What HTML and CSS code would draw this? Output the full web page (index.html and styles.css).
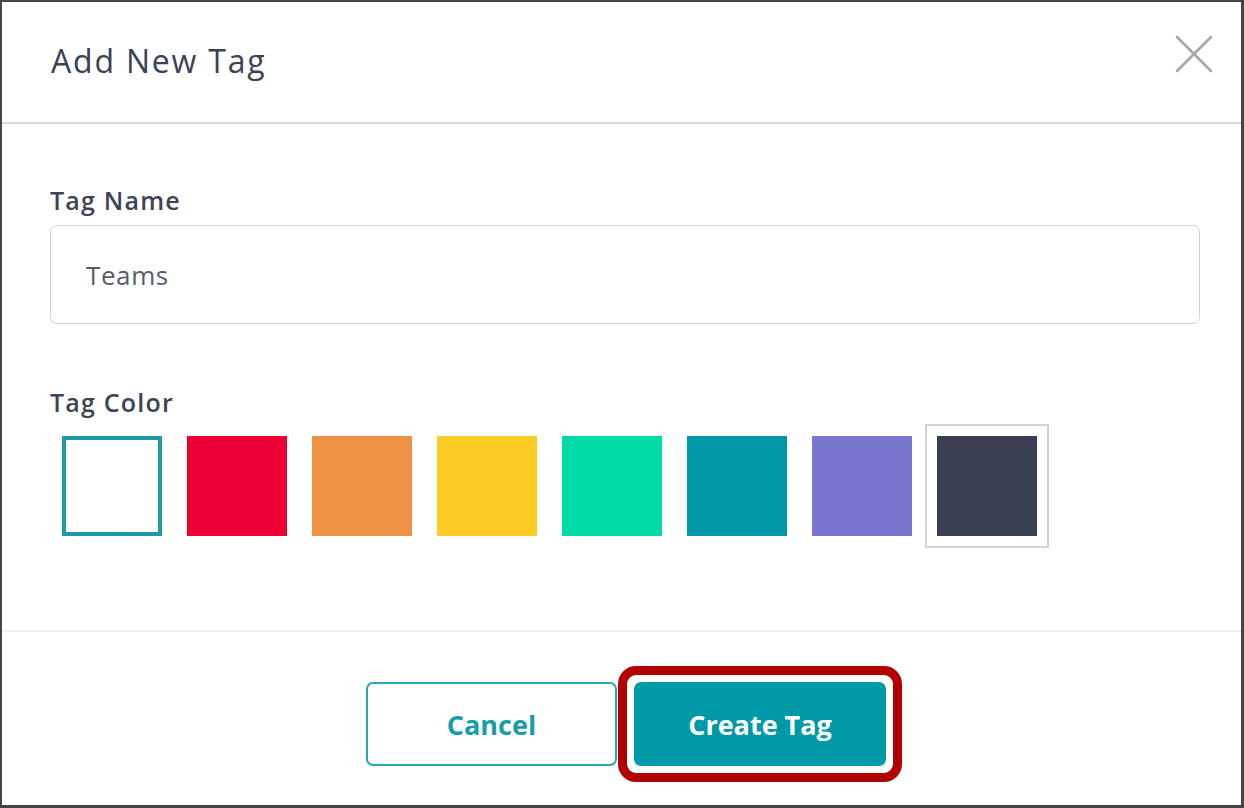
FILE: index.html
```html
<!DOCTYPE html>
<html lang="en">
<head>
<meta charset="utf-8">
<title>Add New Tag</title>
<link rel="stylesheet" href="styles.css">
</head>
<body>
<div class="frame">
  <header class="modal-header">
    <h1 class="modal-title">Add New Tag</h1>
    <button class="close-btn" aria-label="Close">
      <svg width="38" height="38" viewBox="0 0 38 38"><path d="M2 2 L36 36 M36 2 L2 36" stroke="#a3a7ad" stroke-width="2.6" stroke-linecap="round" fill="none"/></svg>
    </button>
  </header>
  <section class="modal-body">
    <label class="field-label">Tag Name</label>
    <div class="text-input">Teams</div>
    <label class="field-label color-label">Tag Color</label>
    <div class="swatches">
      <div class="swatch-cell"><div class="swatch swatch-white selected"></div></div>
      <div class="swatch-cell"><div class="swatch swatch-red"></div></div>
      <div class="swatch-cell"><div class="swatch swatch-orange"></div></div>
      <div class="swatch-cell"><div class="swatch swatch-yellow"></div></div>
      <div class="swatch-cell"><div class="swatch swatch-green"></div></div>
      <div class="swatch-cell"><div class="swatch swatch-teal"></div></div>
      <div class="swatch-cell"><div class="swatch swatch-purple"></div></div>
      <div class="swatch-cell focused"><div class="swatch swatch-dark"></div></div>
    </div>
  </section>
  <footer class="modal-footer">
    <button class="btn btn-outline">Cancel</button>
    <button class="btn btn-primary highlighted">Create Tag</button>
  </footer>
</div>
</body>
</html>
```
FILE: styles.css
```css
* { box-sizing: border-box; }
html, body { margin: 0; padding: 0; background: #ffffff; }
body { font-family: "Open Sans", "Lato", sans-serif; }

.frame {
  width: 1244px;
  height: 808px;
  border: 2px solid #454545;
  border-right-width: 3px;
  border-bottom-width: 3px;
  background: #fff;
  display: flex;
  flex-direction: column;
}

.modal-header {
  height: 122px;
  border-bottom: 2px solid #d6d8dc;
  display: flex;
  align-items: center;
  justify-content: space-between;
  padding: 0 28px 4px 49px;
}
.modal-title {
  margin: 0;
  font-size: 32px;
  font-weight: 500;
  color: #3a4254;
  letter-spacing: 1.8px;
}
.close-btn {
  border: 0;
  background: none;
  padding: 0;
  width: 38px;
  height: 38px;
  margin-bottom: 12px;
  cursor: pointer;
}
.close-btn svg { display: block; }

.modal-body {
  padding: 60px 41px 0 48px;
  height: 508px;
  border-bottom: 2px solid #f1f1f2;
}
.field-label {
  display: block;
  font-size: 25px;
  line-height: 32px;
  font-weight: 600;
  color: #3d4456;
  letter-spacing: 1.2px;
}
.text-input {
  margin-top: 9px;
  height: 99px;
  border: 1.5px solid #cfd2d7;
  border-radius: 7px;
  display: flex;
  align-items: center;
  padding-left: 35px;
  font-size: 26px;
  color: #575d6c;
  letter-spacing: 0.6px;
}
.color-label { margin-top: 62px; }

.swatches {
  display: flex;
  gap: 1px;
  margin-top: 6px;
}
.swatch-cell {
  width: 124px;
  height: 124px;
  padding: 10px;
  border: 2px solid transparent;
}
.swatch-cell.focused { border-color: #d3d3d3; }
.swatch { width: 100px; height: 100px; }
.swatch-white { background: #fff; }
.swatch.selected { border: 4px solid #1a9ba7; }
.swatch-red { background: #ec0033; }
.swatch-orange { background: #ee9246; }
.swatch-yellow { background: #fdcd25; }
.swatch-green { background: #00dba8; }
.swatch-teal { background: #0099a8; }
.swatch-purple { background: #7976d0; }
.swatch-dark { background: #393f52; }

.modal-footer {
  display: flex;
  justify-content: center;
  gap: 17px;
  padding: 50px 0 0 9px;
}
.btn {
  width: 251px;
  height: 84px;
  border-radius: 7px;
  font-family: inherit;
  font-size: 27px;
  font-weight: 700;
  cursor: pointer;
}
.btn-outline {
  background: #fff;
  border: 2px solid #2aa7b1;
  color: #1a9ca8;
}
.btn-primary {
  background: #0099a8;
  border: 0;
  color: #fff;
  width: 252px;
}
.highlighted { position: relative; }
.highlighted::after {
  content: "";
  position: absolute;
  inset: -16px;
  border: 9px solid #b20000;
  border-radius: 18px;
  pointer-events: none;
}
```
